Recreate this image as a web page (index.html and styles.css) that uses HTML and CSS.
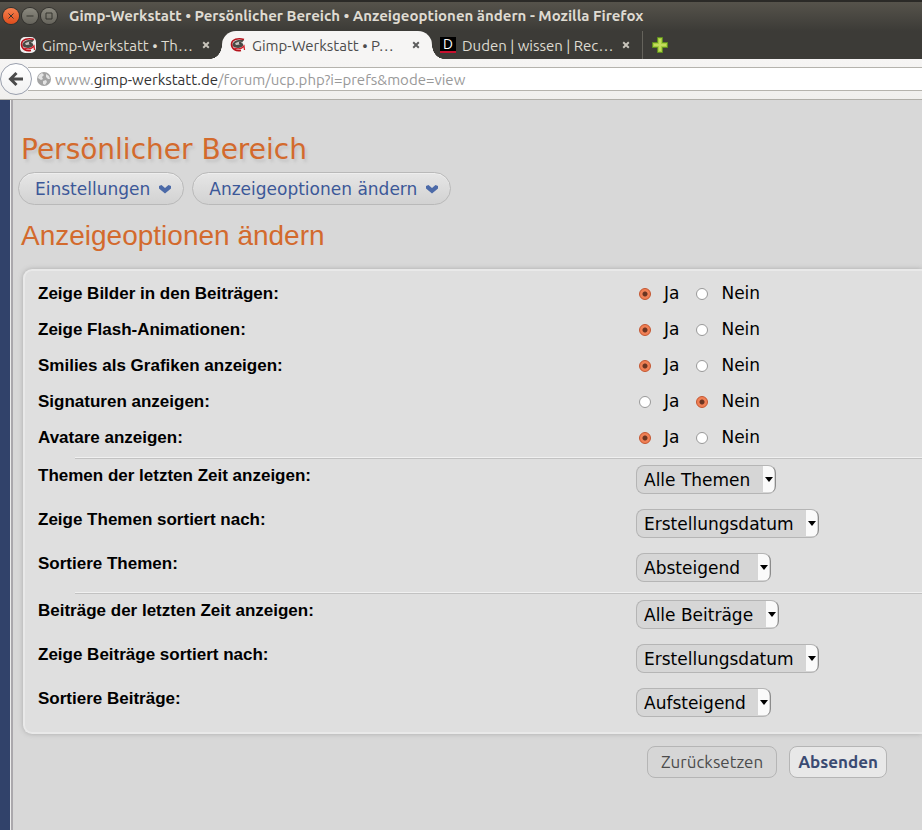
FILE: index.html
```html
<!DOCTYPE html>
<html lang="de">

<head>
    <meta charset="UTF-8">
    <meta name="viewport" content="width=device-width, initial-scale=1.0">
    <title>Gimp-Werkstatt • Persönlicher Bereich • Anzeigeoptionen ändern</title>
    <link rel="stylesheet" href="styles.css">
</head>

<body>
    <svg class="symbols" aria-hidden="true">
        <symbol id="gimp" viewBox="0 0 16 16">
            <path d="M3 6C5 3 9 2.500 14 3L12 5.500L13.500 8C12 11 8 12 4 10C2 9 2 7.500 3 6Z" fill="#4a4b46"/>
            <path d="M5 6.500C7 4.500 10 4.500 12 5C11 7 8 8.500 6 8Z" fill="#c4c4be"/>
            <path d="M14 2.500C8 .5 2 2.500 1.500 7C1.500 12 6 14.500 11 13.500" fill="none" stroke="#b5121b" stroke-width="1.6"/>
            <path d="M4 11C8 12.500 12 11.500 14 9L14.500 13" fill="none" stroke="#d0212a" stroke-width="1.3"/>
            <circle cx="10" cy="6" r="1" fill="#222"/>
        </symbol>
        <symbol id="close" viewBox="0 0 10 10">
            <path d="M1.500 1.500L8.500 8.500M8.500 1.500L1.500 8.500" fill="none" stroke="currentColor" stroke-width="2.4"/>
        </symbol>
        <symbol id="chevron" viewBox="0 0 14 10">
            <path d="M1 2L3.500 1L7 4L10.500 1L13 2L13 4.500L7 9.500L1 4.500Z" fill="#4c6aa8"/>
        </symbol>
    </svg>

    <header class="titlebar">
        <button class="win-btn win-close" aria-label="Schließen"><svg viewBox="0 0 16 16"><path d="M5.500 5.500L10.500 10.500M10.500 5.500L5.500 10.500"/></svg></button>
        <button class="win-btn" aria-label="Minimieren"><svg viewBox="0 0 16 16"><path d="M4.500 8H11.500"/></svg></button>
        <button class="win-btn" aria-label="Maximieren"><svg viewBox="0 0 16 16"><path d="M5 5H11V11H5Z"/></svg></button>
        <span class="win-title">Gimp-Werkstatt • Persönlicher Bereich • Anzeigeoptionen ändern - Mozilla Firefox</span>
    </header>

    <div class="tabs">
        <div class="tab">
            <svg class="favicon light"><use href="#gimp"/></svg>
            <span class="tab-text">Gimp-Werkstatt • Th…</span>
            <button class="tab-close" aria-label="Tab schließen"><svg><use href="#close"/></svg></button>
        </div>
        <div class="tab active">
            <svg class="favicon"><use href="#gimp"/></svg>
            <span class="tab-text">Gimp-Werkstatt • P…</span>
            <button class="tab-close" aria-label="Tab schließen"><svg><use href="#close"/></svg></button>
        </div>
        <div class="tab">
            <span class="favicon duden">D</span>
            <span class="tab-text">Duden | wissen | Rec…</span>
            <button class="tab-close" aria-label="Tab schließen"><svg><use href="#close"/></svg></button>
        </div>
        <button class="new-tab" aria-label="Neuer Tab">
            <svg viewBox="0 0 16 16"><path d="M5.500 .5H10.500V5.500H15.500V10.500H10.500V15.500H5.500V10.500H.5V5.500H5.500Z" fill="#a6cb3c" stroke="#5f8f1f"/><path d="M8 2V14M2 8H14" stroke="#c2dc5c" stroke-width="2"/></svg>
        </button>
    </div>

    <div class="navbar">
        <button class="back" aria-label="Zurück"><svg viewBox="0 0 16 16"><path d="M8.500 2L2.500 8L8.500 14M3 8H15" fill="none" stroke="#4a4a4a" stroke-width="3"/></svg></button>
        <div class="urlbar">
            <svg class="globe" viewBox="0 0 14 14"><circle cx="7" cy="7" r="7" fill="#a3a3a3"/><path d="M2 3L5 1L7 3L5 5L6 7L4 8L1 6ZM9 2L12 4L13 7L11 7L9 5ZM6 9L9 8L10 10L8 13L6 12Z" fill="#e4e4e4"/></svg>
            <span>www.<b>gimp-werkstatt.de</b>/forum/ucp.php?i=prefs&amp;mode=view</span>
        </div>
    </div>

    <main class="page">
        <h1>Persönlicher Bereich</h1>
        <nav class="menu">
            <a href="#">Einstellungen <svg><use href="#chevron"/></svg></a>
            <a href="#">Anzeigeoptionen ändern <svg><use href="#chevron"/></svg></a>
        </nav>
        <h2>Anzeigeoptionen ändern</h2>

        <form>
            <div class="panel">
                <div class="row" role="radiogroup" aria-labelledby="l-bilder">
                    <span class="name" id="l-bilder">Zeige Bilder in den Beiträgen:</span>
                    <div class="choice">
                        <label><input type="radio" name="bilder" checked>Ja</label>
                        <label><input type="radio" name="bilder">Nein</label>
                    </div>
                </div>
                <div class="row" role="radiogroup" aria-labelledby="l-flash">
                    <span class="name" id="l-flash">Zeige Flash-Animationen:</span>
                    <div class="choice">
                        <label><input type="radio" name="flash" checked>Ja</label>
                        <label><input type="radio" name="flash">Nein</label>
                    </div>
                </div>
                <div class="row" role="radiogroup" aria-labelledby="l-smilies">
                    <span class="name" id="l-smilies">Smilies als Grafiken anzeigen:</span>
                    <div class="choice">
                        <label><input type="radio" name="smilies" checked>Ja</label>
                        <label><input type="radio" name="smilies">Nein</label>
                    </div>
                </div>
                <div class="row" role="radiogroup" aria-labelledby="l-sig">
                    <span class="name" id="l-sig">Signaturen anzeigen:</span>
                    <div class="choice">
                        <label><input type="radio" name="sig">Ja</label>
                        <label><input type="radio" name="sig" checked>Nein</label>
                    </div>
                </div>
                <div class="row" role="radiogroup" aria-labelledby="l-avatare">
                    <span class="name" id="l-avatare">Avatare anzeigen:</span>
                    <div class="choice">
                        <label><input type="radio" name="avatare" checked>Ja</label>
                        <label><input type="radio" name="avatare">Nein</label>
                    </div>
                </div>
                <hr>
                <div class="row tall">
                    <label class="name" for="topic-days">Themen der letzten Zeit anzeigen:</label>
                    <div><span class="select"><select id="topic-days"><option>Alle Themen</option></select></span></div>
                </div>
                <div class="row tall">
                    <label class="name" for="topic-key">Zeige Themen sortiert nach:</label>
                    <div><span class="select"><select id="topic-key"><option>Erstellungsdatum</option></select></span></div>
                </div>
                <div class="row tall">
                    <label class="name" for="topic-dir">Sortiere Themen:</label>
                    <div><span class="select"><select id="topic-dir"><option>Aufsteigend</option><option selected>Absteigend</option></select></span></div>
                </div>
                <hr>
                <div class="row tall">
                    <label class="name" for="post-days">Beiträge der letzten Zeit anzeigen:</label>
                    <div><span class="select"><select id="post-days"><option>Alle Beiträge</option></select></span></div>
                </div>
                <div class="row tall">
                    <label class="name" for="post-key">Zeige Beiträge sortiert nach:</label>
                    <div><span class="select"><select id="post-key"><option>Erstellungsdatum</option></select></span></div>
                </div>
                <div class="row tall">
                    <label class="name" for="post-dir">Sortiere Beiträge:</label>
                    <div><span class="select"><select id="post-dir"><option>Aufsteigend</option><option>Absteigend</option></select></span></div>
                </div>
            </div>
            <div class="buttons">
                <button type="reset">Zurücksetzen</button>
                <button type="submit">Absenden</button>
            </div>
        </form>
    </main>
</body>

</html>
```
FILE: styles.css
```css
* {
    box-sizing: border-box;
}

body {
    margin: 0;
    min-height: 100vh;
    display: flex;
    flex-direction: column;
    overflow-x: hidden;
    background-color: #d8d8d8;
    font-family: "Ubuntu", "Noto Sans", sans-serif;
    font-size: 15px;
}

button {
    font-family: inherit;
    padding: 0;
    border: none;
    background: none;
    cursor: pointer;
}

.symbols {
    display: none;
}

/* Fenster */
.titlebar {
    height: 31px;
    padding: 0 4px 2px 3px;
    display: flex;
    align-items: center;
    gap: 3px;
    border-top: 2px solid #2b2a27;
    background: linear-gradient(#56534b, #3c3b37);
}

.win-btn {
    width: 16px;
    height: 16px;
    border-radius: 50%;
    background: linear-gradient(#8b897f, #66645c);
    box-shadow: 0 0 0 1px #33322e;
}

.win-close {
    background: linear-gradient(#f6814f, #df4d1c);
}

.win-btn svg {
    display: block;
    fill: none;
    stroke: #35342f;
}

.win-title {
    margin-left: 9px;
    color: #dfdbd2;
    font-size: 15px;
    font-weight: bold;
    white-space: nowrap;
}

.tabs {
    height: 28px;
    padding-left: 12px;
    display: flex;
    background: #3c3b37;
    color: #dfdbd2;
}

.tab {
    width: 210px;
    padding: 0 12px 0 8px;
    display: flex;
    align-items: center;
    gap: 6px;
    position: relative;
}

.tab.active {
    background: #f6f5f4;
    color: #4c4c4c;
    border-radius: 14px 14px 0 0;
}

/* geschwungene Kanten des aktiven Tabs */
.tab.active::before,
.tab.active::after {
    content: "";
    position: absolute;
    bottom: 0;
    width: 12px;
    height: 14px;
}

.tab.active::before {
    right: 100%;
    background: radial-gradient(ellipse 12px 14px at 0 0, transparent 97%, #f6f5f4);
}

.tab.active::after {
    left: 100%;
    background: radial-gradient(ellipse 12px 14px at 100% 0, transparent 97%, #f6f5f4);
}

.favicon {
    width: 16px;
    height: 16px;
    flex: none;
}

.favicon.light {
    background: #eee;
    border-radius: 5px;
}

.duden {
    background: #000;
    border-bottom: 2px solid #c8102e;
    color: #fff;
    font-size: 14px;
    line-height: 14px;
    text-align: center;
}

.tab-text {
    flex: 1;
    font-size: 15px;
    white-space: nowrap;
}

.tab-close {
    height: 8px;
    color: #c9c5bc;
}

.active .tab-close {
    color: #5c5c5c;
}

.tab-close svg {
    display: block;
    width: 8px;
    height: 8px;
}

.new-tab {
    padding: 0 9px;
    border-left: 1px solid #65635c;
}

.new-tab svg {
    display: block;
    width: 16px;
    height: 16px;
}

.navbar {
    height: 41px;
    display: flex;
    align-items: center;
    background: linear-gradient(#f6f5f4, #f0efed);
    border-bottom: 1px solid #b0aea8;
}

.back {
    width: 32px;
    height: 32px;
    display: flex;
    align-items: center;
    justify-content: center;
    border: 1px solid #9aa0ae;
    border-radius: 50%;
    background: linear-gradient(#fff, #f1f1f1);
    position: relative;
}

.back svg {
    width: 16px;
}

.urlbar {
    flex: 1;
    height: 24px;
    margin-left: -4px;
    padding-left: 9px;
    display: flex;
    align-items: center;
    gap: 4px;
    border: solid #b5b3ad;
    border-width: 1px 0;
    background: #fff;
    color: #999;
    font-size: 15px;
    white-space: nowrap;
}

.urlbar b {
    color: #333;
    font-weight: normal;
}

.globe {
    width: 14px;
    height: 14px;
}

/* Forum */
.page {
    flex: 1;
    padding: 34px 0 40px 8px;
    border-left: 10px solid #31426a;
    box-shadow: inset 1px 0 #ececec, inset 3px 0 #aaa8ac;
    font-family: "DejaVu Sans", sans-serif;
    font-size: 17px;
}

h1,
h2 {
    margin: 0 0 0 3px;
    color: #d36a2d;
    font-size: 28px;
    font-weight: normal;
    line-height: 32px;
}

h1 {
    text-shadow: 2px 3px 3px #c4c4c4;
}

h2 {
    margin-top: 15px;
    font-family: "Liberation Sans", Arial, sans-serif;
}

.menu {
    margin-top: 6px;
    display: flex;
    gap: 8px;
}

.menu a {
    height: 33px;
    padding: 0 11px 0 16px;
    display: flex;
    align-items: center;
    gap: 8px;
    border: 1px solid #b9b9b9;
    border-radius: 17px;
    background: linear-gradient(#e6e6e6, #d2d2d2);
    box-shadow: inset 0 1px #eee;
    color: #3c5898;
    text-decoration: none;
    white-space: nowrap;
}

.menu svg {
    width: 14px;
    height: 10px;
}

.panel {
    margin: 17px 0 0 5px;
    padding: 5px 0 15px 13px;
    border: 2px solid #e9e9e9;
    border-right: none;
    border-radius: 9px 0 0 9px;
    background: #dfdfdf;
    box-shadow: 0 0 5px #aaa;
}

.row {
    height: 36px;
    display: grid;
    grid-template-columns: 23fr 11fr;
    align-items: center;
}

.row.tall {
    height: 29px;
    align-items: start;
}

.tall + .tall {
    margin-top: 15px;
}

.name {
    font: bold 17px/20px "Liberation Sans", Arial, sans-serif;
}

.tall .name {
    padding-top: 1px;
}

.choice {
    padding-bottom: 3px;
    display: flex;
    gap: 17px;
}

.choice label {
    display: flex;
    align-items: center;
    gap: 13px;
}

input[type="radio"] {
    appearance: none;
    width: 12px;
    height: 12px;
    margin: 2px 0 0 3px;
    border: 1px solid #999;
    border-radius: 50%;
    background: #fff;
}

input[type="radio"]:checked {
    border-color: #c4532c;
    background: radial-gradient(circle, #6b3522 0 2px, #f08055 3px);
}

.choice label + label input {
    margin-left: 0;
}

hr {
    height: 2px;
    margin: 1px 0 6px 37px;
    border: none;
    border-top: 1px solid #f0f0f0;
    border-bottom: 1px solid #c2c2c2;
}

.tall + hr {
    margin-top: 10px;
}

.select {
    display: inline-block;
    position: relative;
}

select {
    display: block;
    appearance: none;
    height: 29px;
    padding: 0 24px 0 7px;
    border: 1px solid #b5b5b5;
    border-right-color: #8c8c8c;
    border-radius: 8px;
    background: linear-gradient(#fafafa, #fafafa) right 1px top / 11px 26px no-repeat #d6d6d6;
    color: #000;
    font: 17px "DejaVu Sans", sans-serif;
}

.select::after {
    content: "";
    position: absolute;
    top: 12px;
    right: 3px;
    border: 4px solid transparent;
    border-top: 5px solid #000;
    border-bottom: none;
    pointer-events: none;
}

.buttons {
    margin: 12px 35px 0 0;
    display: flex;
    justify-content: flex-end;
    gap: 12px;
}

.buttons button {
    height: 32px;
    padding: 0 13px 2px;
    border: 1px solid #b5b5b5;
    border-radius: 8px;
    background: #d6d6d6;
    color: #4c4c4c;
    font-size: 17px;
    font-family: "Ubuntu", "Noto Sans", sans-serif;
}

.buttons button[type="submit"] {
    padding: 0 8px 2px;
    background: #e8e8e8;
    color: #3a4a72;
    font-weight: bold;
}
```
